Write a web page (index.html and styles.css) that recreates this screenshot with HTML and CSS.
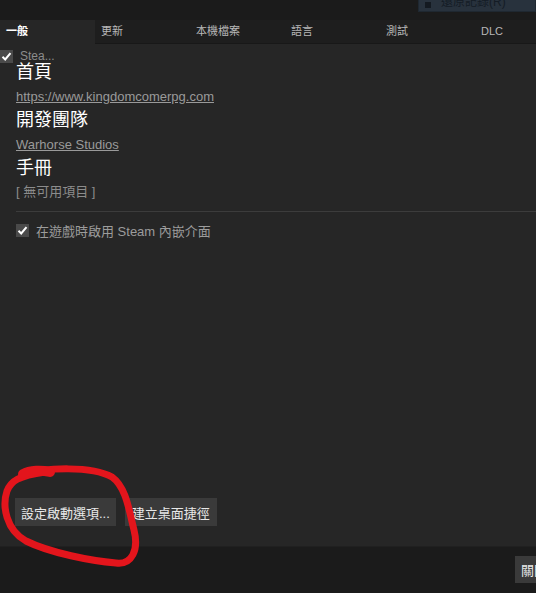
FILE: index.html
```html
<!DOCTYPE html>
<html lang="zh-Hant">
<head>
  <meta charset="UTF-8" />
  <title>內容 - 一般</title>
  <meta name="viewport" content="width=device-width, initial-scale=1" />
  <link rel="stylesheet" href="styles.css">
</head>
<body>
  <div class="window">
    <div class="titlebar">
      <div class="restore-btn"><span class="restore-icon"></span><span class="restore-text">還原記錄(R)</span></div>
    </div>
    <div class="tabs">
      <div class="tab active">一般</div>
      <div class="tab">更新</div>
      <div class="tab">本機檔案</div>
      <div class="tab">語言</div>
      <div class="tab">測試</div>
      <div class="tab">DLC</div>
    </div>
    <div class="content">
      <div class="top-check">
        <span class="checkbox"><svg viewBox="0 0 13 13"><polyline points="2.5,6.8 5.2,9.5 10.5,3.2" /></svg></span>
        <span class="top-check-label">Stea...</span>
      </div>
      <div class="section">
        <div class="heading">首頁</div>
        <a class="link" href="#">https://www.kingdomcomerpg.com</a>
        <div class="heading">開發團隊</div>
        <a class="link" href="#">Warhorse Studios</a>
        <div class="heading">手冊</div>
        <div class="muted">[ 無可用項目 ]</div>
      </div>
      <div class="divider"></div>
      <label class="option">
        <span class="checkbox"><svg viewBox="0 0 13 13"><polyline points="2.5,6.8 5.2,9.5 10.5,3.2" /></svg></span>
        <span>在遊戲時啟用 Steam 內嵌介面</span>
      </label>
      <div class="actions">
        <button class="btn">設定啟動選項...</button>
        <button class="btn btn-wide">建立桌面捷徑</button>
      </div>
    </div>
    <div class="footer">
      <button class="btn close-btn">關閉</button>
    </div>
    <!-- hand-drawn red circle around the launch options button -->
    <svg class="scribble" viewBox="0 0 536 593" width="536" height="593">
      <path d="M 24 475 C 45 467, 92 466, 112 477 C 126 487, 129 510, 134 530 C 139 550, 132 565, 116 563 C 92 561, 50 553, 26 541 C 6 530, 2 506, 7 491 C 11 481, 18 476, 45 472" />
      <path class="blob" d="M 23 474 C 30 470, 42 470, 50 472" />
    </svg>
  </div>
</body>
</html>
```

FILE: styles.css
```css
body {
  margin: 0;
  background: #1b1b1b;
  font-family: "Liberation Sans", Arial, "Noto Sans CJK TC", sans-serif;
  color: #c8c8c8;
}
.window {
  width: 536px;
  height: 593px;
  display: flex;
  flex-direction: column;
  position: relative;
  overflow: hidden;
}
.titlebar {
  height: 20px;
  background: #1b1b1b;
  display: flex;
  justify-content: flex-end;
  align-items: flex-start;
}
.restore-btn {
  width: 110px;
  height: 11px;
  background: #28323d;
  border: 1px solid #1f2831;
  border-top: none;
  display: flex;
  align-items: flex-end;
  overflow: hidden;
  gap: 10px;
  padding-left: 6px;
}
.restore-icon {
  width: 6px;
  height: 6px;
  background: #141a21;
  margin-bottom: 3px;
}
.restore-text {
  font-size: 12px;
  line-height: 12px;
  color: #141c25;
  margin-bottom: 3px;
}
.tabs {
  height: 23px;
  display: flex;
  background: #1e1e1e;
  border-bottom: 1px solid #181818;
}
.tab {
  width: 95px;
  flex-shrink: 0;
  padding-left: 6px;
  box-sizing: border-box;
  font-size: 11px;
  line-height: 23px;
  color: #b8b8b8;
}
.tab.active {
  background: #262626;
  color: #ffffff;
  font-weight: bold;
  height: 24px;
}
.content {
  flex: 1;
  background: #262626;
  display: flex;
  flex-direction: column;
  padding: 5px 0 20px 16px;
}
.top-check {
  display: flex;
  align-items: center;
  gap: 7px;
  height: 14px;
  margin-left: -16px;
}
.top-check-label {
  font-size: 12px;
  color: #8c8c8c;
}
.checkbox {
  width: 13px;
  height: 13px;
  background: #4a4a4a;
  display: inline-block;
  flex-shrink: 0;
}
.checkbox svg {
  display: block;
  width: 13px;
  height: 13px;
}
.checkbox polyline {
  fill: none;
  stroke: #ffffff;
  stroke-width: 2;
}
.section {
  display: flex;
  flex-direction: column;
  align-items: flex-start;
}
.heading {
  font-size: 18px;
  line-height: 20px;
  color: #ffffff;
  margin-top: 4px;
}
.section .heading:first-child {
  margin-top: -1px;
}
.link {
  font-size: 13px;
  line-height: 18px;
  color: #9a9a9a;
  text-decoration: underline;
  margin-top: 6px;
}
.muted {
  font-size: 13px;
  line-height: 16px;
  color: #8c8c8c;
  margin-top: 6px;
}
.divider {
  height: 1px;
  background: #3c3c3c;
  margin-top: 11px;
}
.option {
  display: flex;
  align-items: center;
  gap: 7px;
  margin-top: 9px;
  font-size: 13px;
  color: #9c9c9c;
}
.actions {
  margin-top: auto;
  display: flex;
  gap: 9px;
  margin-left: -1px;
}
.btn {
  font-family: "Liberation Sans", Arial, "Noto Sans CJK TC", sans-serif;
  font-size: 13px;
  color: #e8e8e8;
  background: #3a3a3a;
  border: none;
  height: 28px;
  padding: 0 6px;
}
.btn-wide {
  padding: 0 7px;
}
.footer {
  height: 47px;
  background: #1b1b1b;
  border-top: 1px solid #202020;
  box-sizing: border-box;
  display: flex;
  justify-content: flex-end;
  align-items: flex-start;
  padding-top: 9px;
  margin-right: -30px;
}
.close-btn {
  width: 51px;
  height: 27px;
  text-align: left;
}
.scribble {
  position: absolute;
  left: 0;
  top: 0;
  pointer-events: none;
}
.scribble path {
  fill: none;
  stroke: #e3151c;
  stroke-width: 7;
  stroke-linecap: round;
}
.scribble .blob {
  stroke-width: 10;
}
```
